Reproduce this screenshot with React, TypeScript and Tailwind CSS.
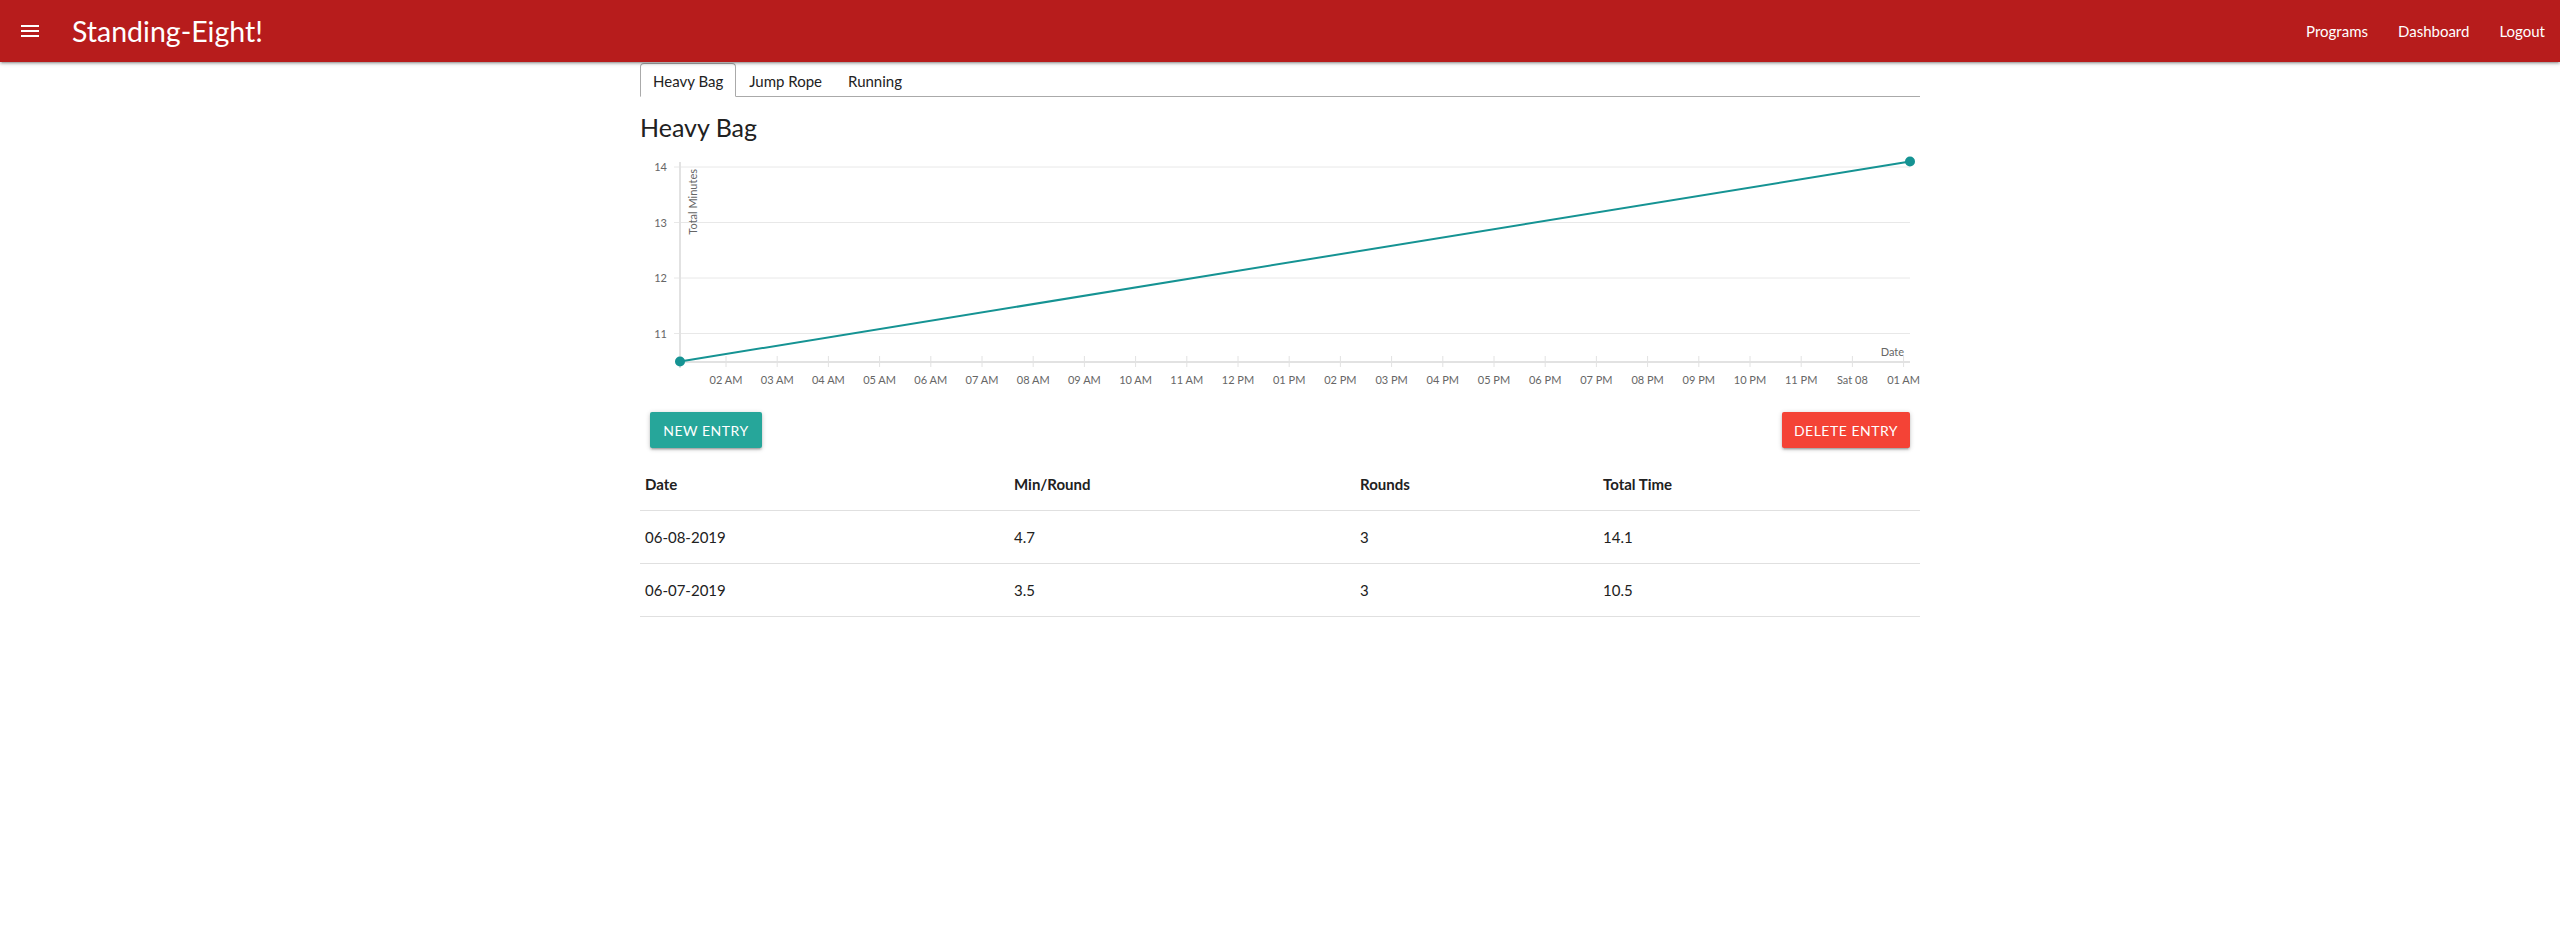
import React from "react";

const FONT = { fontFamily: "Lato, 'Noto Sans', sans-serif" };

const hours = [
  "02 AM","03 AM","04 AM","05 AM","06 AM","07 AM","08 AM","09 AM","10 AM","11 AM","12 PM",
  "01 PM","02 PM","03 PM","04 PM","05 PM","06 PM","07 PM","08 PM","09 PM","10 PM","11 PM","Sat 08","01 AM",
];

function Chart() {
  const yOf = (v: number) => 16 + (14 - v) * 55.5;
  const grid = [14, 13, 12, 11];
  return (
    <svg width="1280" height="245" className="block" style={{ fontFamily: "Lato, sans-serif" }}>
      {grid.map((v) => (
        <g key={v}>
          <line x1={34} x2={1270} y1={yOf(v)} y2={yOf(v)} stroke="#e8e8e8" strokeWidth={1} />
          <text x={27} y={yOf(v) + 4} fontSize={11} fill="#666" textAnchor="end">{v}</text>
        </g>
      ))}
      <line x1={40} x2={40} y1={11} y2={217} stroke="#e2e2e2" strokeWidth={2} />
      <line x1={40} x2={1270} y1={211} y2={211} stroke="#e2e2e2" strokeWidth={2} />
      {hours.map((h, i) => {
        const x = 86 + 51.2 * i;
        return (
          <g key={h + i}>
            <line x1={x} x2={x} y1={205} y2={216} stroke="#e2e2e2" strokeWidth={1} />
            <text x={x} y={233} fontSize={11} fill="#666" textAnchor="middle">{h}</text>
          </g>
        );
      })}
      <text transform="translate(57,18) rotate(-90)" fontSize={11} fill="#666" textAnchor="end">Total Minutes</text>
      <text x={1264} y={205} fontSize={11} fill="#666" textAnchor="end">Date</text>
      <line x1={40} y1={210.5} x2={1270} y2={10.5} stroke="#159393" strokeWidth={2} />
      <circle cx={40} cy={210.5} r={5} fill="#159393" />
      <circle cx={1270} cy={10.5} r={5} fill="#159393" />
    </svg>
  );
}

const rows = [
  ["06-08-2019", "4.7", "3", "14.1"],
  ["06-07-2019", "3.5", "3", "10.5"],
];

export default function App() {
  return (
    <div className="min-h-screen bg-white text-[#212121]" style={FONT}>
      <header className="h-[62px] bg-[#b71c1c] flex items-center shadow-[0_2px_2px_0_rgba(0,0,0,0.14),0_3px_1px_-2px_rgba(0,0,0,0.12),0_1px_5px_0_rgba(0,0,0,0.2)] relative z-10">
        <div className="pl-[21px] w-[72px] flex items-center">
          <svg width="18" height="12" viewBox="0 0 18 12">
            <rect x="0" y="0" width="18" height="2" fill="#fff" />
            <rect x="0" y="5" width="18" height="2" fill="#fff" />
            <rect x="0" y="10" width="18" height="2" fill="#fff" />
          </svg>
        </div>
        <div className="text-white text-[28.5px] leading-none">Standing-Eight!</div>
        <nav className="ml-auto flex items-center text-white text-[15px]">
          <a className="px-[15px]">Programs</a>
          <a className="px-[15px]">Dashboard</a>
          <a className="px-[15px]">Logout</a>
        </nav>
      </header>

      <main className="w-[1280px] mx-auto">
        <ul className="flex border-b border-[#aaa] mt-px">
          <li className="h-[34px] px-[12px] flex items-center pt-[3px] border border-[#aaa] border-b-white rounded-t-[4px] -mb-px text-[15px] text-[#222] bg-white">Heavy Bag</li>
          <li className="h-[34px] px-[12px] flex items-center pt-[3px] border border-transparent -mb-px text-[15px] text-[#222]">Jump Rope</li>
          <li className="h-[34px] px-[12px] flex items-center pt-[3px] border border-transparent -mb-px text-[15px] text-[#222]">Running</li>
        </ul>

        <h2 className="mt-[15px] text-[25px] leading-[30px] text-[#212121]">Heavy Bag</h2>

        <div className="mt-[9px]">
          <Chart />
        </div>

        <div className="mt-[16px] px-[10px] flex justify-between">
          <button className="w-[112px] h-[36px] bg-[#26a69a] text-white text-[14px] tracking-[0.5px] rounded-[2px] shadow-[0_2px_2px_0_rgba(0,0,0,0.14),0_3px_1px_-2px_rgba(0,0,0,0.12),0_1px_5px_0_rgba(0,0,0,0.2)]">NEW ENTRY</button>
          <button className="w-[128px] h-[36px] bg-[#f44336] text-white text-[14px] tracking-[0.5px] rounded-[2px] shadow-[0_2px_2px_0_rgba(0,0,0,0.14),0_3px_1px_-2px_rgba(0,0,0,0.12),0_1px_5px_0_rgba(0,0,0,0.2)]">DELETE ENTRY</button>
        </div>

        <div className="mt-[10px] text-[15px] leading-[22px]">
          <div className="grid grid-cols-[369px_346px_243px_1fr] border-b border-[#e0e0e0] font-bold">
            <div className="py-[15px] px-[5px]">Date</div>
            <div className="py-[15px] px-[5px]">Min/Round</div>
            <div className="py-[15px] px-[5px]">Rounds</div>
            <div className="py-[15px] px-[5px]">Total Time</div>
          </div>
          {rows.map((r) => (
            <div key={r[0]} className="grid grid-cols-[369px_346px_243px_1fr] border-b border-[#e0e0e0]">
              {r.map((c, i) => (
                <div key={i} className="py-[15px] px-[5px]">{c}</div>
              ))}
            </div>
          ))}
        </div>
      </main>
    </div>
  );
}
